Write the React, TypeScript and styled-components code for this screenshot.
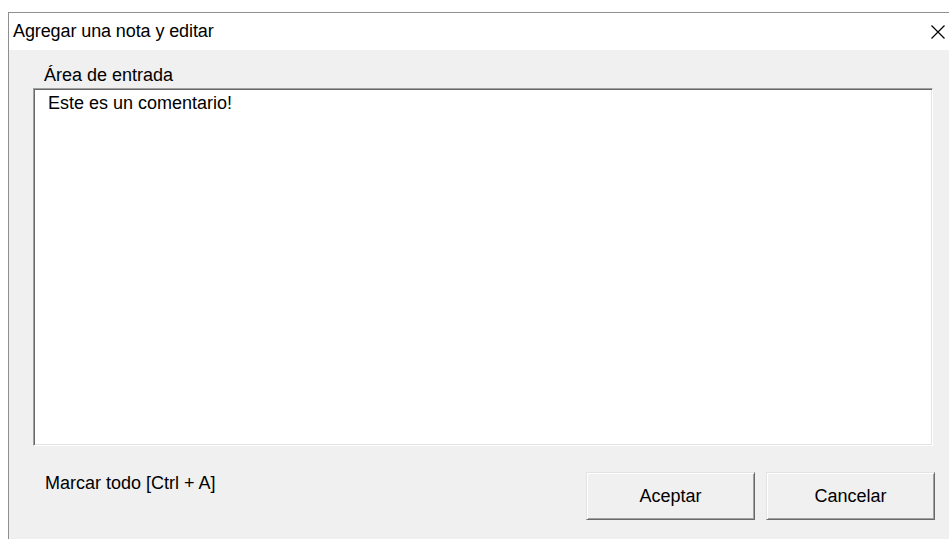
import React from 'react';
import styled, {createGlobalStyle} from 'styled-components';

const GlobalStyle = createGlobalStyle`
  html, body {
    margin: 0;
    padding: 0;
    background: #ffffff;
    overflow: hidden;
  }
  body {
    font-family: "Liberation Sans", Arial, sans-serif;
    font-size: 18px;
    color: #000;
  }
`;

const Window = styled.div`
  margin: 12px 0 0 8px;
  height: 527px;
  display: flex;
  flex-direction: column;
  border-top: 1px solid #8f8f8f;
  border-left: 1px solid #8f8f8f;
  box-sizing: border-box;
`;

const TitleBar = styled.div`
  height: 37px;
  flex: none;
  display: flex;
  align-items: center;
  justify-content: space-between;
  padding-left: 4px;
  background: #ffffff;
`;

const Title = styled.span`
  font-size: 18px;
  letter-spacing: -0.1px;
`;

const CloseButton = styled.button`
  width: 20px;
  height: 20px;
  margin-right: 1px;
  padding: 0;
  border: 0;
  background: transparent;
  display: flex;
  align-items: center;
  justify-content: center;
`;

const Client = styled.div`
  flex: 1;
  display: flex;
  flex-direction: column;
  padding: 14px 14px 0 24px;
  background: #f0f0f0;
`;

const FieldLabel = styled.label`
  margin-left: 11px;
  line-height: 22px;
  height: 22px;
  margin-bottom: 2px;
`;

// classic sunken edit box
const NoteInput = styled.textarea`
  width: 900px;
  height: 358px;
  box-sizing: border-box;
  margin: 0;
  padding: 4px 14px;
  resize: none;
  outline: none;
  font-family: "Liberation Sans", Arial, sans-serif;
  font-size: 18px;
  line-height: 21px;
  color: #000;
  background: #ffffff;
  border-style: solid;
  border-width: 1px;
  border-color: #a0a0a0 #ffffff #ffffff #a0a0a0;
  box-shadow: inset 1px 1px 0 #696969, inset -1px -1px 0 #e3e3e3;
`;

const Footer = styled.div`
  display: flex;
  align-items: flex-start;
  justify-content: space-between;
  margin-top: 26px;
`;

const Hint = styled.span`
  margin: 1px 0 0 12px;
  line-height: 21px;
`;

const ButtonRow = styled.div`
  display: flex;
  gap: 11px;
`;

const DialogButton = styled.button<{$width: number}>`
  width: ${p => p.$width}px;
  height: 48px;
  box-sizing: border-box;
  padding: 0;
  font-family: "Liberation Sans", Arial, sans-serif;
  font-size: 18px;
  color: #000;
  background: #f0f0f0;
  border-style: solid;
  border-width: 1px;
  border-color: #e3e3e3 #696969 #696969 #e3e3e3;
  box-shadow: inset 1px 1px 0 #ffffff, inset -1px -1px 0 #a0a0a0;
`;

export default function App() {
  return (
    <>
      <GlobalStyle/>
      <Window>
        <TitleBar>
          <Title>Agregar una nota y editar</Title>
          <CloseButton aria-label="Cerrar">
            <svg width="16" height="16" viewBox="0 0 16 16">
              <path d="M1.5 1.5 L14.5 14.5 M14.5 1.5 L1.5 14.5" stroke="#000" strokeWidth="1.2" fill="none"/>
            </svg>
          </CloseButton>
        </TitleBar>
        <Client>
          <FieldLabel htmlFor="note">Área de entrada</FieldLabel>
          <NoteInput id="note" defaultValue="Este es un comentario!"/>
          <Footer>
            <Hint>Marcar todo [Ctrl + A]</Hint>
            <ButtonRow>
              <DialogButton $width={169}>Aceptar</DialogButton>
              <DialogButton $width={169}>Cancelar</DialogButton>
            </ButtonRow>
          </Footer>
        </Client>
      </Window>
    </>
  );
}
